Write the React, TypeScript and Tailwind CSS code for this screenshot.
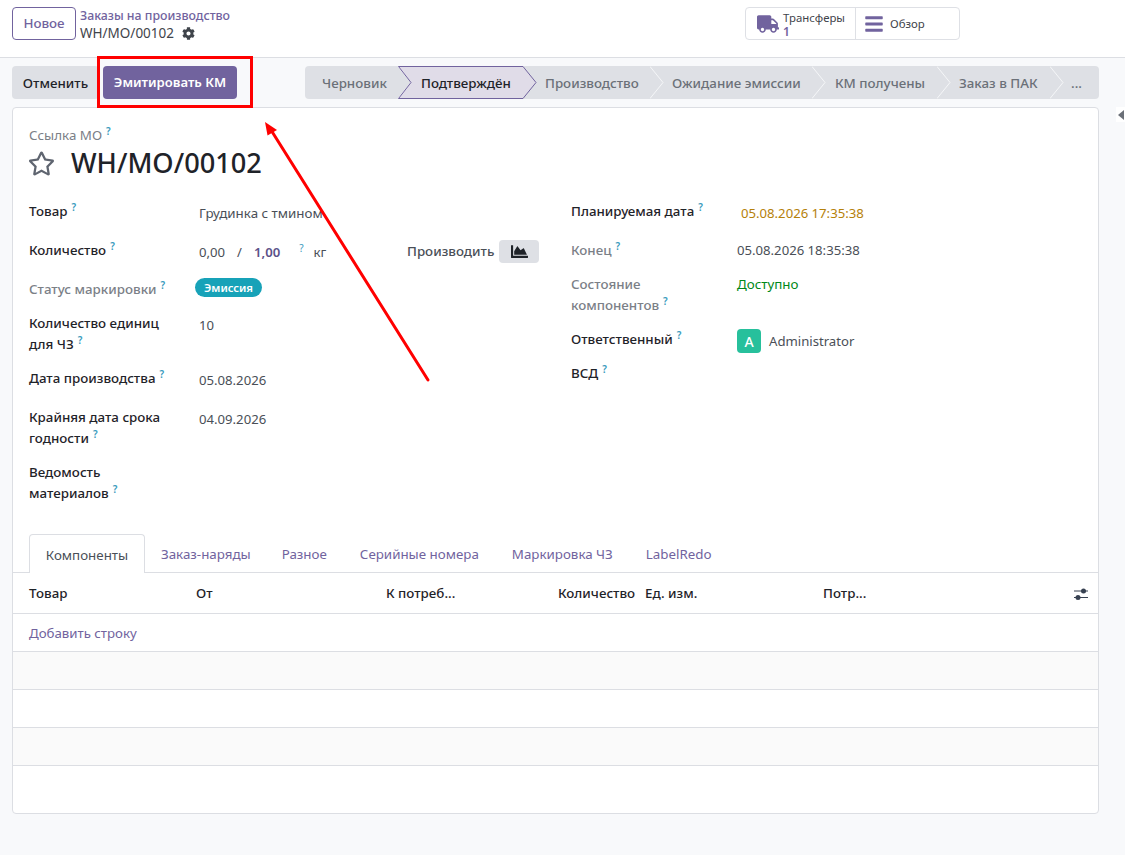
import React from 'react';
import { FaBars, FaChartArea, FaCog, FaRegStar, FaTruck } from 'react-icons/fa';

const Hint = ({ className = '' }: { className?: string }) => (
  <sup className={`text-[10px] font-semibold text-[#3a9bbd] ml-[4px] top-[-5px] ${className}`}>?</sup>
);

const Label = ({ text, muted, hint = true }: { text: React.ReactNode; muted?: boolean; hint?: boolean }) => (
  <div className={`font-medium leading-[21px] ${muted ? 'text-[#7b8087]' : 'text-[#1f2329]'}`}>
    {text}
    {hint && <Hint />}
  </div>
);

const steps = [
  { name: 'Черновик', width: 'w-[93px]', pad: 'pl-[17px]' },
  { name: 'Подтверждён', width: 'w-[125px]', pad: 'pl-[23px]', active: true },
  { name: 'Производство', width: 'w-[127px]', pad: 'pl-[22px]' },
  { name: 'Ожидание эмиссии', width: 'w-[162px]', pad: 'pl-[22px]' },
  { name: 'КМ получены', width: 'w-[125px]', pad: 'pl-[23px]' },
  { name: 'Заказ в ПАК', width: 'w-[113px]', pad: 'pl-[22px]' },
  { name: '...', width: 'w-[49px]', pad: 'pl-[21px]', last: true },
];

const StatusBar = () => (
  <div className="flex h-[33px] w-[794px] rounded bg-[#dee0e5] font-medium">
    {steps.map((step) => (
      <div
        key={step.name}
        className={`relative flex items-center pt-[1px] ${step.width} ${step.pad} ${step.active ? 'text-[#1f2329]' : 'text-[#6b7078]'}`}
      >
        {step.active ? (
          <svg className="absolute left-0 top-0 z-0" width="139" height="33" viewBox="0 0 139 33">
            <path d="M0.5 0.5H125L138 16.5L125 32.5H0.5L13 16.5Z" fill="#e0dce8" stroke="#71639e" />
          </svg>
        ) : (
          !step.last && (
            <svg className="absolute right-[-14px] top-0 z-0" width="14" height="33" viewBox="0 0 14 33">
              <path d="M0 0.5L13 16.5L0 32.5" fill="#dee0e5" stroke="#f5f6f8" />
            </svg>
          )
        )}
        <span className="relative z-10 whitespace-nowrap">{step.name}</span>
      </div>
    ))}
  </div>
);

const tabs = [
  { name: 'Заказ-наряды', shift: '' },
  { name: 'Разное', shift: 'ml-[-1px]' },
  { name: 'Серийные номера', shift: 'ml-[1px]' },
  { name: 'Маркировка ЧЗ', shift: 'ml-[1px]' },
  { name: 'LabelRedo', shift: 'ml-[1px]' },
];

export default function App() {
  return (
    <div className="relative h-[855px] w-[1125px] overflow-hidden bg-[#f8f9fb] text-[13.35px] text-[#4a4f57] font-['Noto_Sans',sans-serif]">
      {/* Top bar */}
      <div className="flex h-[58px] border-b border-[#dcdee3] bg-white pl-3 pt-[7px]">
        <button className="h-[33px] w-[64px] rounded border border-[#71639e] font-medium text-[#71639e]">Новое</button>
        <div className="ml-1 w-[158px] leading-[17px]">
          <div className="text-[12.35px] font-medium leading-[18px] text-[#71639e]">Заказы на производство</div>
          <div className="flex items-center gap-[8px] text-[13.5px] text-[#3f444b]">
            WH/MO/00102 <FaCog className="text-[13px] text-[#3f444b]" />
          </div>
        </div>
        <div className="ml-[507px] flex h-[33px] w-[215px] rounded border border-[#dee0e5]">
          <div className="flex w-[110px] items-center border-r border-[#dee0e5] pl-[11px]">
            <FaTruck className="text-[22px] text-[#71639e]" />
            <div className="ml-[4px] pt-[2px] text-[11.4px] leading-[14px]">
              <div className="text-[#3f444b]">Трансферы</div>
              <div className="text-[12px] font-semibold text-[#71639e]">1</div>
            </div>
          </div>
          <div className="flex items-center pl-[8px]">
            <FaBars className="text-[20px] text-[#71639e]" />
            <span className="ml-[6px] text-[11.4px] text-[#3f444b]">Обзор</span>
          </div>
        </div>
      </div>

      {/* Actions */}
      <div className="flex px-3 pt-2">
        <button className="h-[33px] w-[87px] rounded bg-[#dee0e5] pt-[1px] font-medium text-[#1f2329]">Отменить</button>
        <button className="ml-1 h-[33px] w-[134px] rounded bg-[#71639e] pt-[1px] text-[13.1px] font-semibold text-white">Эмитировать КМ</button>
        <div className="ml-[68px]">
          <StatusBar />
        </div>
      </div>

      {/* Sheet */}
      <div className="mx-3 mt-2 h-[707px] w-[1087px] rounded border border-[#dcdee3] bg-white">
        <div className="px-4 pt-[17px]">
          <div className="leading-[20px] text-[#7b8087]">
            Ссылка МО
            <Hint className="font-normal" />
          </div>
          <div className="flex h-[36px] items-center">
            <FaRegStar className="ml-[-1px] text-[27px] text-[#5f6570]" />
            <h1 className="ml-[16px] text-[27.2px] font-medium text-[#1f2329]">WH/MO/00102</h1>
          </div>
        </div>

        {/* Fields */}
        <div className="mt-[19px] flex px-4 text-[13.15px]">
          <div className="w-[543px]">
            <div className="flex h-[39px] pt-[1px]">
              <div className="w-[170px] text-[13.35px]"><Label text="Товар" /></div>
              <div className="leading-[24px] text-[13.35px]">Грудинка с тмином</div>
            </div>
            <div className="relative flex h-[39px] pt-[1px]">
              <div className="w-[170px] text-[13.35px]"><Label text="Количество" /></div>
              <div className="flex leading-[24px]">
                <span>0,00</span>
                <span className="ml-[12px]">/</span>
                <span className="ml-[12px] font-semibold text-[#5c5289]">1,00</span>
                <span className="ml-[19px] text-[10px] leading-[16px] text-[#3a9bbd]">?</span>
                <span className="ml-[10px]">кг</span>
              </div>
              <div className="absolute left-[378px] top-[1px] flex items-center text-[13.35px]">
                <span className="font-medium">Производить</span>
                <span className="ml-[5px] flex h-[23px] w-[40px] items-center justify-center rounded bg-[#dee0e5]">
                  <FaChartArea className="text-[17px] text-[#1f2329]" />
                </span>
              </div>
            </div>
            <div className="flex h-[35px]">
              <div className="w-[166px] pt-[1px] text-[13.35px]"><Label text="Статус маркировки" muted /></div>
              <div>
                <span className="inline-block h-[19px] rounded-full bg-[#17a2b8] px-[9px] text-[11.2px] font-semibold leading-[19px] text-white">Эмиссия</span>
              </div>
            </div>
            <div className="flex h-[54px]">
              <div className="w-[170px] text-[13.35px]"><Label text={<>Количество единиц<br />для ЧЗ</>} /></div>
              <div className="leading-[24px]">10</div>
            </div>
            <div className="flex h-[39px] pt-[1px]">
              <div className="w-[170px] text-[13.35px]"><Label text="Дата производства" /></div>
              <div className="leading-[24px]">05.08.2026</div>
            </div>
            <div className="flex h-[55px] pt-[1px]">
              <div className="w-[170px] text-[13.35px]"><Label text={<>Крайняя дата срока<br />годности</>} /></div>
              <div className="leading-[24px]">04.09.2026</div>
            </div>
            <div className="w-[170px] pt-[1px] text-[13.35px]"><Label text={<>Ведомость<br />материалов</>} /></div>
          </div>

          <div className="ml-[-1px]">
            <div className="flex h-[39px] pt-[1px]">
              <div className="w-[166px] text-[13.35px]"><Label text="Планируемая дата" /></div>
              <div className="ml-[4px] leading-[24px] text-[#b5810a]">05.08.2026 17:35:38</div>
            </div>
            <div className="flex h-[35px] pt-[1px]">
              <div className="w-[166px] text-[13.35px]"><Label text="Конец" muted /></div>
              <div className="leading-[21px]">05.08.2026 18:35:38</div>
            </div>
            <div className="flex h-[55px]">
              <div className="w-[166px] text-[13.35px]"><Label text={<>Состояние<br />компонентов</>} muted /></div>
              <div className="leading-[21px] text-[#008818] text-[13.35px]">Доступно</div>
            </div>
            <div className="flex h-[34px]">
              <div className="w-[166px] text-[13.35px]"><Label text="Ответственный" /></div>
              <div className="flex items-start">
                <span className="flex h-[24px] w-[24px] items-center justify-center rounded bg-[#27c09c] text-[14px] font-medium text-white">A</span>
                <span className="ml-[8px] leading-[24px]">Administrator</span>
              </div>
            </div>
            <div className="text-[13.35px]"><Label text="ВСД" /></div>
          </div>
        </div>

        {/* Tabs */}
        <div className="mt-[30px] flex h-[39px] border-b border-[#dcdee3] pl-4">
          <div className="flex h-[39px] w-[116px] items-center justify-center rounded-t border border-b-0 border-[#dcdee3] bg-white pt-[2px] text-[#4a4f57]">Компоненты</div>
          {tabs.map((tab) => (
            <div key={tab.name} className={`flex items-center px-4 pt-[2px] text-[#71639e] ${tab.shift}`}>
              {tab.name}
            </div>
          ))}
        </div>

        {/* Table */}
        <div className="relative flex h-[41px] items-center border-b border-[#dcdee3] pl-4 font-medium text-[#1f2329]">
          <span className="w-[167px]">Товар</span>
          <span className="w-[190px]">От</span>
          <span className="w-[172px]">К потреб...</span>
          <span className="w-[87px]">Количество</span>
          <span className="w-[178px]">Ед. изм.</span>
          <span>Потр...</span>
          <svg className="absolute right-[9px] top-[13px]" width="16" height="16" viewBox="0 0 16 16">
            <path d="M1 5H15M1 11.5H15" stroke="#374151" strokeWidth="1" />
            <circle cx="10.5" cy="5" r="2.5" fill="#374151" />
            <circle cx="5" cy="11.5" r="2.5" fill="#374151" />
          </svg>
        </div>
        <div className="flex h-[38px] items-center border-b border-[#dcdee3] pl-4 pt-[3px] text-[13.25px] text-[#71639e]">Добавить строку</div>
        {['bg-[#fafafa]', 'bg-white', 'bg-[#fafafa]'].map((bg, i) => (
          <div key={i} className={`h-[38px] border-b border-[#dcdee3] ${bg}`} />
        ))}
      </div>

      {/* Chatter toggle */}
      <div className="absolute left-[1116px] top-[107px] flex h-[15px] w-[9px] items-center justify-center bg-white">
        <svg width="6" height="10" viewBox="0 0 6 10"><path d="M6 0V10L0 5Z" fill="#6b7078" /></svg>
      </div>

      {/* Annotation */}
      <div className="pointer-events-none absolute left-[97px] top-[56px] h-[52px] w-[156px] border-[3px] border-[#ff0000]" />
      <svg className="pointer-events-none absolute left-0 top-0" width="1125" height="855" viewBox="0 0 1125 855">
        <path d="M428 380L271 130" stroke="#ff0000" strokeWidth="3" strokeLinecap="round" />
        <path d="M265 122L277 130L267.5 135.5Z" fill="#ff0000" />
      </svg>
    </div>
  );
}
